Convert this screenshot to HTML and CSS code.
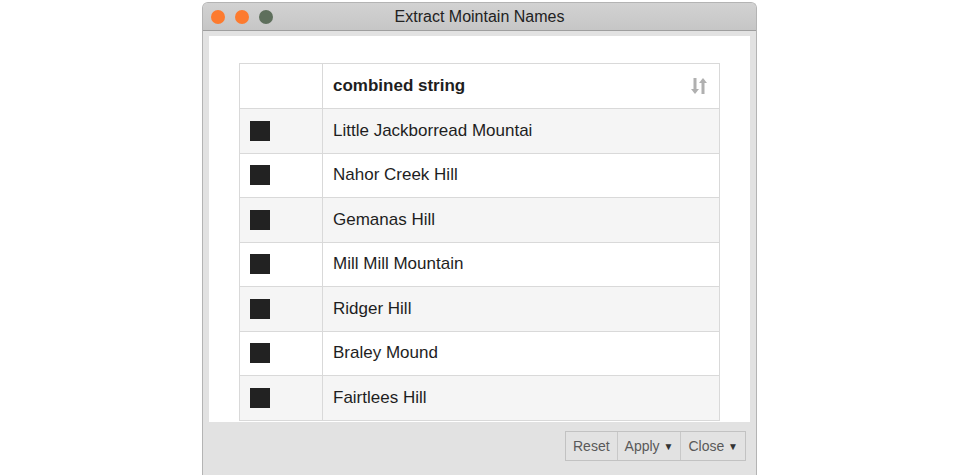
FILE: index.html
```html
<!DOCTYPE html>
<html>
<head>
<meta charset="utf-8">
<link rel="stylesheet" href="styles.css">
</head>
<body>
<div class="window">
  <div class="titlebar">
    <div class="lights">
      <span class="light orange"></span>
      <span class="light orange"></span>
      <span class="light green"></span>
    </div>
    <div class="title">Extract Mointain Names</div>
  </div>
  <div class="frame">
    <div class="content">
      <table class="grid">
        <thead>
          <tr>
            <th class="chk"></th>
            <th class="name">
              <div class="hcell"><span>combined string</span>
                <svg class="sort" width="18" height="20" viewBox="0 0 18 20">
                  <path d="M5 2v13" stroke="#b0b0b0" stroke-width="3" fill="none"/>
                  <path d="M1 13l4 5 4-5z" fill="#b0b0b0"/>
                  <path d="M13 18V5" stroke="#b0b0b0" stroke-width="3" fill="none"/>
                  <path d="M9 7l4-5 4 5z" fill="#b0b0b0"/>
                </svg>
              </div>
            </th>
          </tr>
        </thead>
        <tbody>
          <tr class="odd"><td class="chk"><span class="box"></span></td><td class="name">Little Jackborread Mountai</td></tr>
          <tr><td class="chk"><span class="box"></span></td><td class="name">Nahor Creek Hill</td></tr>
          <tr class="odd"><td class="chk"><span class="box"></span></td><td class="name">Gemanas Hill</td></tr>
          <tr><td class="chk"><span class="box"></span></td><td class="name">Mill Mill Mountain</td></tr>
          <tr class="odd"><td class="chk"><span class="box"></span></td><td class="name">Ridger Hill</td></tr>
          <tr><td class="chk"><span class="box"></span></td><td class="name">Braley Mound</td></tr>
          <tr class="odd"><td class="chk"><span class="box"></span></td><td class="name">Fairtlees Hill</td></tr>
        </tbody>
      </table>
    </div>
  </div>
  <div class="footer">
    <div class="btns">
      <button class="btn">Reset</button>
      <button class="btn">Apply <span class="caret">▼</span></button>
      <button class="btn">Close <span class="caret">▼</span></button>
    </div>
  </div>
</div>
</body>
</html>
```

FILE: styles.css
```css
html, body {
  margin: 0;
  padding: 0;
  background: #ffffff;
  font-family: "Liberation Sans", Arial, sans-serif;
}
.window {
  margin: 2px 0 0 202px;
  width: 553px;
  height: 472px;
  border: 1px solid #b4b4b4;
  border-bottom: none;
  border-radius: 6px 6px 0 0;
  background: #e2e2e2;
  display: flex;
  flex-direction: column;
  overflow: hidden;
}
.titlebar {
  height: 27px;
  flex: none;
  background: linear-gradient(#d2d2d2, #c6c6c6);
  border-bottom: 1px solid #9e9e9e;
  display: flex;
  align-items: center;
  position: relative;
}
.lights {
  display: flex;
  gap: 10px;
  padding-left: 8px;
  margin-top: 1px;
}
.light {
  width: 14px;
  height: 14px;
  border-radius: 50%;
  display: block;
}
.light.orange { background: #fd7b2f; }
.light.green { background: #5e6f5c; }
.title {
  position: absolute;
  left: 0;
  right: 0;
  top: 5px;
  text-align: center;
  font-size: 16px;
  color: #222222;
  pointer-events: none;
}
.frame {
  flex: none;
  padding: 5px 6px 0 6px;
}
.content {
  background: #ffffff;
  height: 386px;
  overflow: hidden;
  padding: 27px 0 0 30px;
  box-sizing: border-box;
}
.grid {
  border-collapse: collapse;
  width: 481px;
  font-size: 17px;
  color: #1e1e1e;
}
.grid th, .grid td {
  border: 1px solid #d9d9d9;
  height: 44.5px;
  padding: 0;
  box-sizing: border-box;
}
.grid th { background: #ffffff; text-align: left; height: 45px; }
.grid .chk { width: 83px; padding-left: 10px; }
.grid .name { padding-left: 10px; padding-right: 10px; }
.hcell {
  display: flex;
  align-items: center;
  justify-content: space-between;
  font-weight: bold;
}
.sort { margin-right: 1px; }
.grid tr.odd td { background: #f5f5f5; }
.box {
  display: block;
  width: 20px;
  height: 20px;
  background: #222222;
}
.footer {
  flex: 1;
  display: flex;
  justify-content: flex-end;
  align-items: flex-start;
  padding: 9px 10px 0 0;
}
.btns {
  display: flex;
  border: 1px solid #c2c2c2;
}
.btn {
  font-family: "Liberation Sans", Arial, sans-serif;
  font-size: 14px;
  color: #595959;
  background: #e2e2e2;
  border: none;
  border-left: 1px solid #c8c8c8;
  height: 28px;
  padding: 0 7px;
  margin: 0;
}
.btn:first-child { border-left: none; }
.caret { font-size: 10px; vertical-align: 1px; color: #333; }
```
